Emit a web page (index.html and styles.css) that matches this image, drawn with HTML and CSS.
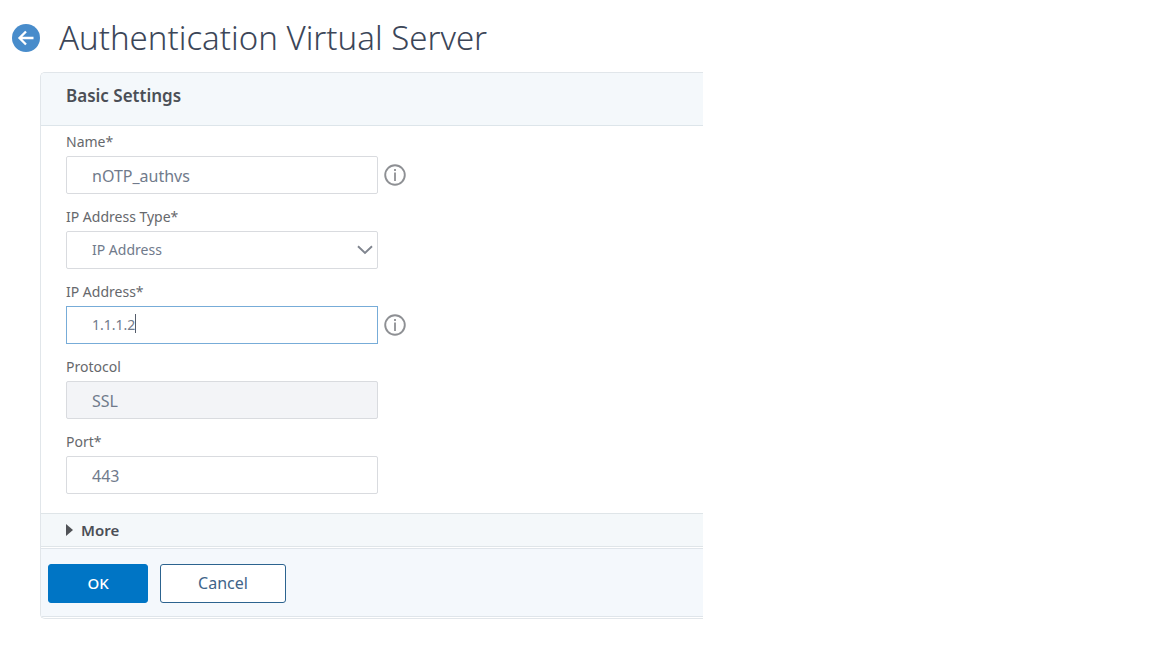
FILE: index.html
```html
<!DOCTYPE html>
<html lang="en">
<head>
<meta charset="utf-8">
<meta name="viewport" content="width=device-width, initial-scale=1">
<title>Authentication Virtual Server</title>
<link rel="stylesheet" href="styles.css">
</head>
<body>
<header class="page-header">
  <button class="back" type="button" aria-label="Back">
    <svg viewBox="0 0 28 28" width="28" height="28" aria-hidden="true">
      <circle cx="14" cy="14" r="14" fill="#488ccb"/>
      <path d="M21.5 14H8M14 7.5L7.5 14l6.500 6.500" fill="none" stroke="#fff" stroke-width="2.3"/>
    </svg>
  </button>
  <h1 class="page-title">Authentication Virtual Server</h1>
</header>
<main class="content">
  <form class="panel">
    <h2 class="panel-head">Basic Settings</h2>
    <div class="fields">
      <div class="field">
        <label class="label" for="name">Name*</label>
        <div class="control-row">
          <input class="control" id="name" type="text" value="nOTP_authvs">
          <button class="info" type="button" aria-label="Name help">
            <svg viewBox="0 0 22 22" width="22" height="22" aria-hidden="true"><circle cx="11" cy="11" r="9.8" fill="none" stroke="#8e9094" stroke-width="1.9"/><path d="M11 8.500v8.500M11 5v2" stroke="#8e9094" stroke-width="1.8"/></svg>
          </button>
        </div>
      </div>
      <div class="field">
        <label class="label" for="type">IP Address Type*</label>
        <div class="control-row">
          <div class="select-wrap">
            <select class="control control-compact" id="type"><option>IP Address</option></select>
            <svg class="chevron" viewBox="0 0 16 10" width="16" height="10" aria-hidden="true"><path d="M1 1.2l7 6.8 7-6.8" fill="none" stroke="#80858f" stroke-width="1.9"/></svg>
          </div>
        </div>
      </div>
      <div class="field">
        <label class="label" for="ip">IP Address*</label>
        <div class="control-row">
          <div class="select-wrap">
            <input class="control control-compact control-active" id="ip" type="text" value="1.1.1.2">
            <span class="caret"></span>
          </div>
          <button class="info" type="button" aria-label="IP Address help">
            <svg viewBox="0 0 22 22" width="22" height="22" aria-hidden="true"><circle cx="11" cy="11" r="9.8" fill="none" stroke="#8e9094" stroke-width="1.9"/><path d="M11 8.500v8.500M11 5v2" stroke="#8e9094" stroke-width="1.8"/></svg>
          </button>
        </div>
      </div>
      <div class="field">
        <label class="label" for="protocol">Protocol</label>
        <div class="control-row"><input class="control" id="protocol" type="text" value="SSL" disabled></div>
      </div>
      <div class="field">
        <label class="label" for="port">Port*</label>
        <div class="control-row"><input class="control" id="port" type="text" value="443"></div>
      </div>
    </div>
    <button class="more" type="button" aria-expanded="false">
      <svg viewBox="0 0 7 12" width="7" height="12" aria-hidden="true"><path d="M0 0l7 6-7 6z" fill="#505357"/></svg>
      More
    </button>
    <div class="actions">
      <button class="button button-primary" type="button">OK</button>
      <button class="button button-secondary" type="button">Cancel</button>
    </div>
  </form>
</main>
</body>
</html>
```
FILE: styles.css
```css
* {
  box-sizing: border-box;
}

body {
  margin: 0;
  background: #fff;
  color: #66686c;
  font: 15px/20px "Noto Sans", "Open Sans", sans-serif;
}

button,
input,
select {
  font: inherit;
}

.page-header {
  display: flex;
  align-items: center;
  gap: 19px;
  padding: 17px 12px 13px;
}

.back,
.info {
  display: flex;
  padding: 0;
  border: 0;
  background: none;
  cursor: pointer;
}

.page-title {
  margin: 0;
  color: #3c4658;
  font-size: 33px;
  font-weight: 300;
  line-height: 42px;
}

.content {
  max-width: 703px;
  padding-left: 40px;
}

.panel {
  border: 1px solid #e1e6ea;
  border-right: 0;
  border-radius: 5px 0 0 5px;
  overflow: hidden;
}

.panel-head {
  margin: 0;
  padding: 13px 25px 19px;
  border-bottom: 1px solid #dde5ea;
  background: #f4f8fb;
  color: #4b4f56;
  font-size: 17px;
  font-weight: 600;
  line-height: 20px;
}

.fields {
  display: flex;
  flex-direction: column;
  gap: 13px;
  padding: 6px 25px 19px;
}

.field {
  display: flex;
  flex-direction: column;
  gap: 4px;
}

.label {
  align-self: flex-start;
  font-size: 14px;
}

.control-row {
  display: flex;
  align-items: center;
  gap: 6px;
}

.select-wrap {
  position: relative;
  width: 312px;
}

.control {
  display: block;
  width: 312px;
  max-width: 100%;
  height: 38px;
  padding: 1px 25px 0;
  border: 1px solid #d9dbdf;
  border-radius: 2px;
  outline: 0;
  background: #fff;
  color: #707a8b;
  font-size: 16px;
  appearance: none;
}

.control-compact {
  padding: 0 25px 1px;
  font-size: 14px;
}

.control:disabled {
  background: #f3f4f7;
}

.control-active {
  border-color: #77acd8;
  border-radius: 0;
}

.chevron {
  position: absolute;
  top: 14px;
  right: 5px;
  pointer-events: none;
}

.caret {
  position: absolute;
  top: 8px;
  left: 69px;
  width: 1px;
  height: 19px;
  background: #555d6b;
}

.more {
  display: flex;
  align-items: center;
  gap: 8px;
  width: 100%;
  height: 34px;
  margin-bottom: 1px;
  padding: 0 25px;
  border: solid #dfe5e8;
  border-width: 1px 0;
  background: #f4f8fa;
  color: #4b4f56;
  font-weight: 600;
}

.actions {
  display: flex;
  gap: 12px;
  margin-bottom: 1px;
  padding: 15px 7px 13px;
  border: solid #dfe5ea;
  border-width: 1px 0;
  background: #f4f8fc;
}

.button {
  height: 39px;
  padding-bottom: 2px;
  border: 1px solid #0075c5;
  border-radius: 3px;
  cursor: pointer;
}

.button-primary {
  width: 100px;
  background: #0075c5;
  color: #fff;
  font-weight: 500;
}

.button-secondary {
  width: 126px;
  border-color: #2c638f;
  background: #fff;
  color: #406489;
  font-size: 16px;
}
```
